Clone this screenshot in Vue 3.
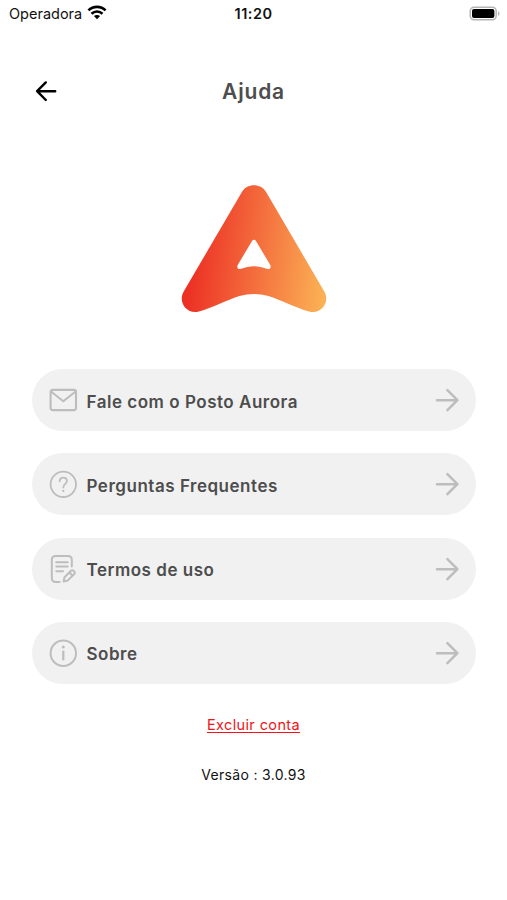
<script setup>
const items = [
  { icon: "mail", label: "Fale com o Posto Aurora" },
  { icon: "question", label: "Perguntas Frequentes" },
  { icon: "terms", label: "Termos de uso" },
  { icon: "info", label: "Sobre" }
];
</script>

<template>
  <div class="screen">
    <div class="status-bar">
      <div class="carrier">
        <span>Operadora</span>
        <svg width="20" height="15" viewBox="0 0 20 15">
          <g fill="none" stroke="#000" stroke-width="2.6">
            <path d="M1.4 5.4C6.2 .7 13.8 .7 18.6 5.4" />
            <path d="M4.5 8.7C7.6 5.8 12.4 5.8 15.5 8.7" />
          </g>
          <path d="M6.9 11C8.7 9.5 11.3 9.5 13.1 11L10 14.2Z" fill="#000" />
        </svg>
      </div>
      <span class="clock">11:20</span>
      <svg class="battery" width="32" height="16" viewBox="0 0 32 16">
        <rect x="1.2" y="1.2" width="26" height="12.6" rx="4" fill="#fff" stroke="#b5b5b5" stroke-width="1.5" />
        <rect x="3" y="3" width="22.4" height="9" rx="2" fill="#000" />
        <path d="M29 5.2C31 6 31 9 29 9.8Z" fill="#b5b5b5" />
      </svg>
    </div>

    <header class="header">
      <svg class="back" width="24" height="24" viewBox="0 0 24 24">
        <path d="M21.2 12.2H3.4M11.8 3.4L3.1 12.2L11.8 21" fill="none" stroke="#000" stroke-width="2.4" stroke-linecap="round" stroke-linejoin="round" />
      </svg>
      <h1>Ajuda</h1>
    </header>

    <svg class="logo" width="146" height="130" viewBox="0 0 146 130">
      <defs>
        <linearGradient id="aurora" gradientUnits="userSpaceOnUse" x1="8" y1="92" x2="142" y2="108">
          <stop offset="0" stop-color="#ec3024" />
          <stop offset="0.5" stop-color="#f4703e" />
          <stop offset="1" stop-color="#fbb054" />
        </linearGradient>
      </defs>
      <path
        fill="url(#aurora)"
        fill-rule="evenodd"
        d="M61.2 7.5C66 -1 80 -1 84.8 7.5L143.3 107.5C149.5 118 140 131 128 127.4C115 124 99 115.7 87.5 112C78 109.2 68 109.2 58.5 112C47 115.7 31 124 18 127.4C6 131 -3.5 118 2.7 107.5Z
        M70.9 57.2C72 55.4 74 55.4 75.1 57.2L89.1 80.7C90.7 83.5 88.8 86 85.7 84.8C77.5 81.3 68.5 81.3 60.3 84.8C57.2 86 55.3 83.5 56.9 80.7Z"
      />
    </svg>

    <nav class="menu">
      <div v-for="item in items" :key="item.icon" class="item">
        <svg class="icon" width="30" height="30" viewBox="0 0 30 30" fill="none" stroke="#bdbdbd" stroke-width="1.8" stroke-linecap="round" stroke-linejoin="round">
          <g v-if="item.icon === 'mail'" stroke-width="2.1">
            <rect x="2.6" y="4.9" width="25.4" height="20.2" rx="2" />
            <path d="M3 6.5L15.3 16.2L27.6 6.5" />
          </g>
          <g v-else-if="item.icon === 'question'">
            <circle cx="15.3" cy="15.3" r="12.7" />
            <path d="M11.7 12.3C11.7 7.4 18.9 7.6 18.9 12.1C18.9 15 15.3 14.8 15.3 18.4" />
            <path d="M15.3 21.8V21.9" stroke-width="2.2" />
          </g>
          <g v-else-if="item.icon === 'terms'" stroke-width="2">
            <path d="M11.6 28H7.8C5.3 28 3.8 26.5 3.8 24V5.8C3.8 3.3 5.3 2 7.8 2H20C22.4 2 23.8 3.3 23.8 5.8V12.5" />
            <path d="M8.3 8.2H19.7M8.3 12.6H19.7M8.3 17.2H15" />
            <path d="M15.6 27.6L16.5 23.3L23 16.8C24.8 15.3 27.9 18 26.2 20.1L19.7 26.5ZM21.4 18.5L24.6 21.7" />
          </g>
          <g v-else stroke-width="2">
            <circle cx="15.3" cy="15.3" r="12.7" />
            <path d="M15.3 13.5V21.5" stroke-width="2.2" />
            <path d="M15.3 9V9.1" stroke-width="3" />
          </g>
        </svg>
        <span class="label">{{ item.label }}</span>
        <svg width="26" height="26" viewBox="0 0 26 26">
          <path d="M3 13.2H23M13.4 3.2L23.4 13.2L13.4 23.2" fill="none" stroke="#bdbdbd" stroke-width="2.5" stroke-linecap="round" stroke-linejoin="round" />
        </svg>
      </div>
    </nav>

    <a class="delete">Excluir conta</a>
    <p class="version">Versão : 3.0.93</p>
  </div>
</template>

<style>
body {
  background: #fff;
}
</style>

<style scoped>
.screen {
  width: 507px;
  height: 900px;
  display: flex;
  flex-direction: column;
  align-items: center;
  background: #fff;
  font-family: Inter, "Liberation Sans", sans-serif;
  overflow: hidden;
}

.status-bar {
  width: 100%;
  height: 27px;
  display: grid;
  grid-template-columns: 1fr auto 1fr;
  align-items: center;
  padding: 0 6px 0 9px;
  box-sizing: border-box;
  color: #111;
}

.carrier {
  display: flex;
  align-items: center;
  gap: 5px;
  font-size: 14.5px;
}

.carrier svg {
  margin-top: -2px;
}

.clock {
  margin-left: -3px;
  font-size: 14.5px;
  font-weight: 600;
  letter-spacing: 0.5px;
}

.battery {
  justify-self: end;
  margin-top: 0;
}

.header {
  width: 100%;
  height: 40px;
  margin-top: 44px;
  padding: 0 34px;
  box-sizing: border-box;
  display: grid;
  grid-template-columns: 24px 1fr 24px;
  align-items: center;
}

h1 {
  margin: 2px 0 0;
  text-align: center;
  font-size: 21px;
  line-height: 30px;
  font-weight: 600;
  letter-spacing: 0.8px;
  color: #4d4d4d;
}

.logo {
  margin-top: 73px;
  flex: none;
}

.menu {
  width: 444px;
  margin-top: 55px;
  display: flex;
  flex-direction: column;
  gap: 22.3px;
}

.item {
  height: 62px;
  border-radius: 31px;
  padding: 0 16px;
  box-sizing: border-box;
  display: flex;
  align-items: center;
  background: #f1f1f1;
}

.label {
  flex: 1;
  margin: 3px 0 0 9px;
  font-size: 17px;
  font-weight: 600;
  letter-spacing: 0.52px;
  color: #4d4d4d;
  white-space: nowrap;
}

.delete {
  margin-top: 31px;
  font-size: 14.5px;
  line-height: 20px;
  letter-spacing: 0.38px;
  color: #f01418;
  text-decoration: underline;
  text-underline-offset: 2px;
}

.version {
  margin: 30px 0 0;
  font-size: 14px;
  line-height: 20px;
  letter-spacing: 0.32px;
  color: #111;
}
</style>
